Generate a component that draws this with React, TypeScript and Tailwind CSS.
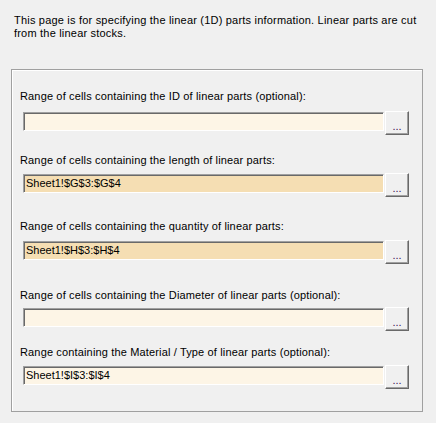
import React from 'react';

interface RangeFieldProps {
  label: string;
  value?: string;
  filled?: boolean;
  top: string;
  gap: string;
}

function RangeField({ label, value, filled, top, gap }: RangeFieldProps) {
  return (
    <div className={top}>
      <div className="h-[13px] leading-[13px] whitespace-nowrap tracking-[0.15px]">{label}</div>
      <div className={`flex items-start ml-[3px] ${gap}`}>
        <div
          className={`mt-[1px] w-[361px] h-[19px] border-t border-l border-[#a0a0a0] border-b border-r border-b-white border-r-white shadow-[inset_1px_1px_0_#696969] pl-[2px] leading-[17px] ${
            filled ? 'bg-[#f5deb3]' : 'bg-[#fdf5e6]'
          }`}
        >
          {value}
        </div>
        <button className="ml-[1px] w-[24px] h-[24px] bg-[#f0f0f0] border-t border-l border-white border-b border-r border-b-[#696969] border-r-[#696969] shadow-[inset_-1px_-1px_0_#a0a0a0] text-[11px] leading-[11px] pt-[6px] text-[#3a1450]">
          ...
        </button>
      </div>
    </div>
  );
}

export default function App() {
  return (
    <div className="w-[436px] h-[423px] bg-[#f0f0f0] text-black text-[11px] font-['Liberation_Sans',Arial,sans-serif] overflow-hidden">
      {/* Description */}
      <p className="pl-[14px] pt-[14px] leading-[13px] whitespace-nowrap tracking-[0.2px]">
        This page is for specifying the linear (1D) parts information. Linear parts are cut
        <br />
        from the linear stocks.
      </p>

      {/* Group box */}
      <div className="mt-[29px] ml-[11px] w-[412px] h-[343px] border border-[#a0a0a0] shadow-[inset_1px_1px_0_#ffffff] pl-[8px]">
        <RangeField
          label="Range of cells containing the ID of linear parts (optional):"
          top="mt-[20px]"
          gap="mt-[8px]"
        />
        <RangeField
          label="Range of cells containing the length of linear parts:"
          value="Sheet1!$G$3:$G$4"
          filled
          top="mt-[19px]"
          gap="mt-[6px]"
        />
        <RangeField
          label="Range of cells containing the quantity of linear parts:"
          value="Sheet1!$H$3:$H$4"
          filled
          top="mt-[23px]"
          gap="mt-[7px]"
        />
        <RangeField
          label="Range of cells containing the Diameter of linear parts (optional):"
          top="mt-[25px]"
          gap="mt-[5px]"
        />
        <RangeField
          label="Range containing the Material / Type of linear parts (optional):"
          value="Sheet1!$I$3:$I$4"
          top="mt-[15px]"
          gap="mt-[6px]"
        />
      </div>
    </div>
  );
}
